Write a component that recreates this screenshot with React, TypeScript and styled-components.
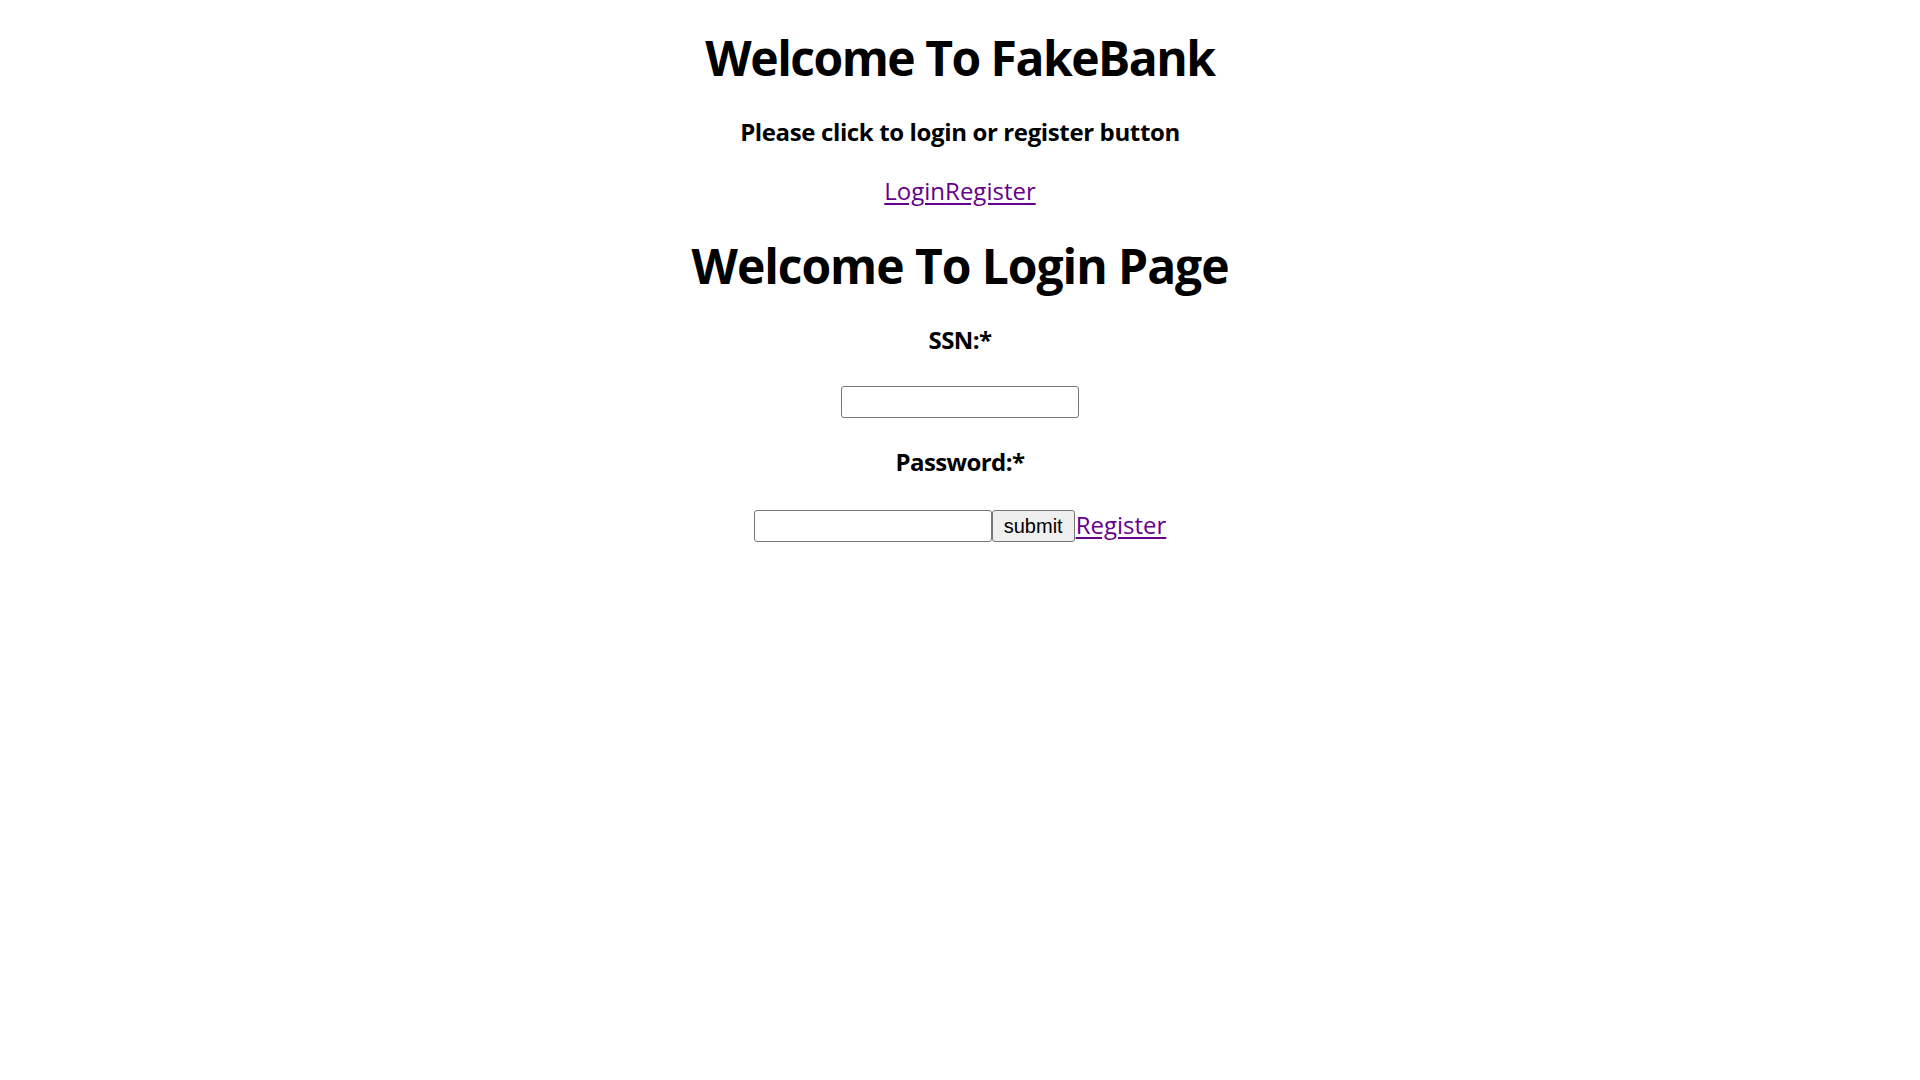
import React from "react";
import styled, { createGlobalStyle } from "styled-components";

const GlobalStyle = createGlobalStyle`
  html, body {
    margin: 0;
    padding: 0;
    background: #ffffff;
  }
  body {
    font-family: "Open Sans", "Noto Sans", sans-serif;
    color: #000000;
  }
`;

const Page = styled.main`
  display: flex;
  flex-direction: column;
  align-items: center;
  padding-top: 30px;
`;

const Title = styled.h1<{ $top?: number; $spacing: number }>`
  margin: ${(p) => p.$top ?? 0}px 0 0;
  font-size: 48px;
  line-height: 56px;
  font-weight: 700;
  letter-spacing: ${(p) => p.$spacing}px;
  text-align: center;
`;

const Subtitle = styled.p<{ $top: number }>`
  margin: ${(p) => p.$top}px 0 0;
  font-size: 24px;
  line-height: 32px;
  font-weight: 700;
  letter-spacing: -0.37px;
`;

const NavRow = styled.nav<{ $top: number }>`
  margin-top: ${(p) => p.$top}px;
  display: flex;
  font-size: 24px;
  line-height: 32px;
`;

const TextLink = styled.a`
  color: #66008c;
  text-decoration: underline;
  text-underline-offset: 3px;
  font-size: 24px;
  line-height: 32px;
`;

const Form = styled.form`
  display: flex;
  flex-direction: column;
  align-items: center;
`;

const FieldLabel = styled.label<{ $top: number }>`
  margin-top: ${(p) => p.$top}px;
  font-size: 24px;
  line-height: 32px;
  font-weight: 700;
  letter-spacing: -0.6px;
`;

const TextInput = styled.input<{ $top?: number }>`
  margin: ${(p) => p.$top ?? 0}px 0 0;
  box-sizing: border-box;
  width: 238px;
  height: 32px;
  padding: 2px 3px;
  border: 1px solid #767676;
  border-radius: 3px;
  background: #ffffff;
  font-family: "Liberation Sans", Arial, sans-serif;
  font-size: 20px;
`;

const SubmitRow = styled.div<{ $top: number }>`
  margin-top: ${(p) => p.$top}px;
  display: flex;
  align-items: center;
`;

const SubmitButton = styled.button`
  box-sizing: border-box;
  height: 32px;
  padding: 0 11px;
  border: 1px solid #767676;
  border-radius: 3px;
  background: #efefef;
  color: #000000;
  font-family: "Liberation Sans", Arial, sans-serif;
  font-size: 20px;
  line-height: 1;
`;

const RowLink = styled(TextLink)`
  margin-left: 1px;
  margin-top: -2px;
`;

export default function App() {
  return (
    <>
      <GlobalStyle />
      <Page>
        <Title $spacing={-1.5}>Welcome To FakeBank</Title>
        <Subtitle $top={30}>Please click to login or register button</Subtitle>
        <NavRow $top={27}>
          <TextLink href="#login">Login</TextLink>
          <TextLink href="#register">Register</TextLink>
        </NavRow>
        <Title $top={31} $spacing={-1.05}>Welcome To Login Page</Title>
        <Form onSubmit={(e) => e.preventDefault()}>
          <FieldLabel $top={30} htmlFor="ssn">SSN:*</FieldLabel>
          <TextInput $top={30} id="ssn" type="text" />
          <FieldLabel $top={28} htmlFor="password">Password:*</FieldLabel>
          <SubmitRow $top={32}>
            <TextInput id="password" type="password" />
            <SubmitButton type="submit">submit</SubmitButton>
            <RowLink href="#register">Register</RowLink>
          </SubmitRow>
        </Form>
      </Page>
    </>
  );
}
